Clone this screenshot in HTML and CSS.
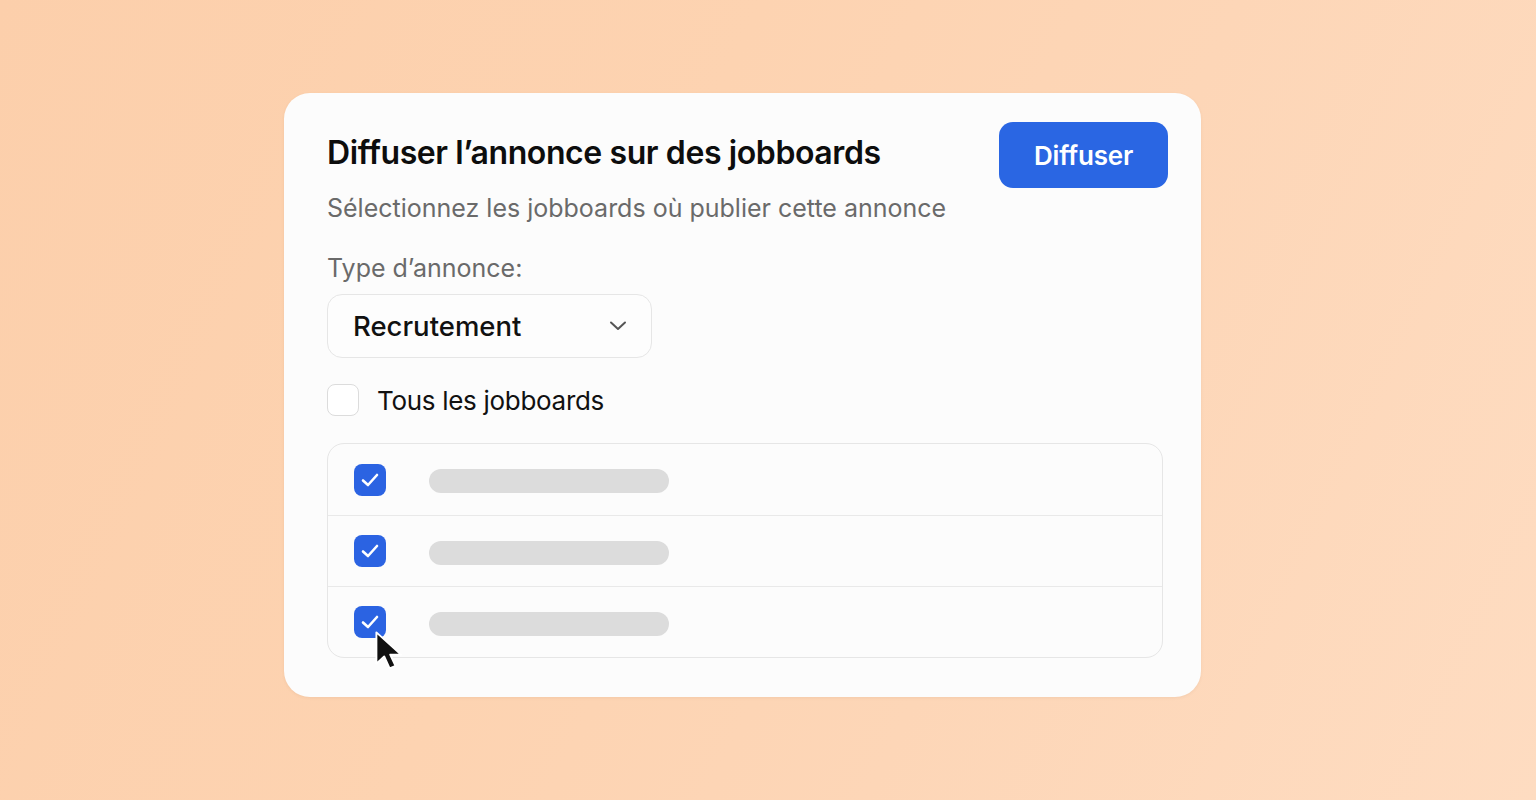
FILE: index.html
```html
<!DOCTYPE html>
<html lang="fr">
<head>
<meta charset="utf-8">
<title>Diffuser l’annonce</title>
<link rel="stylesheet" href="styles.css">
</head>
<body>
<div class="stage">
  <div class="card">
    <div class="header">
      <div class="heading">
        <h1 class="title">Diffuser l’annonce sur des jobboards</h1>
        <p class="subtitle">Sélectionnez les jobboards où publier cette annonce</p>
      </div>
      <button class="btn">Diffuser</button>
    </div>
    <div class="label">Type d’annonce:</div>
    <div class="select">
      <span class="select-value">Recrutement</span>
      <svg class="chev" width="18" height="12" viewBox="0 0 18 12"><path d="M2 2.5 L9 9 L16 2.5" fill="none" stroke="#555" stroke-width="2" stroke-linecap="round" stroke-linejoin="round"/></svg>
    </div>
    <label class="all">
      <span class="box"></span>
      <span class="all-text">Tous les jobboards</span>
    </label>
    <div class="list">
      <div class="row">
        <span class="box checked"><svg width="20" height="16" viewBox="0 0 20 16"><path d="M3 8.5 L8 13 L17 3" fill="none" stroke="#fff" stroke-width="2.6" stroke-linecap="round" stroke-linejoin="round"/></svg></span>
        <span class="bar"></span>
      </div>
      <div class="row">
        <span class="box checked"><svg width="20" height="16" viewBox="0 0 20 16"><path d="M3 8.5 L8 13 L17 3" fill="none" stroke="#fff" stroke-width="2.6" stroke-linecap="round" stroke-linejoin="round"/></svg></span>
        <span class="bar"></span>
      </div>
      <div class="row">
        <span class="box checked"><svg width="20" height="16" viewBox="0 0 20 16"><path d="M3 8.5 L8 13 L17 3" fill="none" stroke="#fff" stroke-width="2.6" stroke-linecap="round" stroke-linejoin="round"/></svg>
          <svg class="cursor" width="36" height="48" viewBox="0 0 30 40"><path d="M2 2 L2 28 L8.5 22 L13 32 L18 30 L13.5 20.5 L22.5 20.5 Z" fill="#111" stroke="#fff" stroke-width="1.6" stroke-linejoin="round"/></svg>
        </span>
        <span class="bar"></span>
      </div>
    </div>
  </div>
</div>
</body>
</html>
```

FILE: styles.css
```css
* { box-sizing: border-box; }
html, body { margin: 0; height: 100%; }
body {
  font-family: Inter, "Noto Sans", "Liberation Sans", sans-serif;
  background: linear-gradient(115deg, #fccfab 0%, #fdd3b1 40%, #fdd6b7 65%, #fedcc1 100%);
  overflow: hidden;
}
.stage {
  padding: 93px 0 0 284px;
}
.card {
  width: 917px;
  height: 604px;
  background: #fcfcfc;
  border-radius: 26px;
  padding: 29px 33px 39px 43px;
  box-shadow: 0 1px 3px rgba(160, 110, 70, 0.10);
}
.header {
  display: flex;
  justify-content: space-between;
  align-items: flex-start;
}
.heading { padding-top: 12px; }
.title {
  margin: 0;
  font-size: 32px;
  line-height: 38px;
  font-weight: 600;
  letter-spacing: -0.4px;
  color: #0d0d0d;
}
.subtitle {
  margin: 20px 0 0;
  font-size: 25px;
  line-height: 32px;
  color: #6a6a6a;
  letter-spacing: 0;
}
.btn {
  width: 169px;
  height: 66px;
  border: none;
  border-radius: 14px;
  background: #2a66e3;
  color: #fff;
  font-family: inherit;
  font-size: 26px;
  font-weight: 600;
  letter-spacing: -0.2px;
  padding: 0;
}
.label {
  margin-top: 28px;
  font-size: 25px;
  line-height: 32px;
  color: #6a6a6a;
}
.select {
  margin-top: 10px;
  width: 325px;
  height: 64px;
  border: 1.5px solid #e6e6e6;
  border-radius: 15px;
  background: #fdfdfd;
  display: flex;
  align-items: center;
  justify-content: space-between;
  padding: 0 24px 0 25px;
}
.select-value {
  font-size: 27.5px;
  font-weight: 500;
  color: #111;
  letter-spacing: 0;
}
.all {
  margin-top: 26px;
  display: flex;
  align-items: center;
  gap: 18px;
  height: 32px;
}
.box {
  width: 32px;
  height: 32px;
  border-radius: 8px;
  border: 1.5px solid #dcdcdc;
  background: #fff;
  flex: none;
  display: flex;
  align-items: center;
  justify-content: center;
}
.all-text {
  font-size: 26px;
  color: #111;
  letter-spacing: -0.3px;
}
.list {
  margin-top: 27px;
  width: 836px;
  border: 1px solid #e6e6e6;
  border-radius: 17px;
  background: #fcfcfc;
}
.row {
  height: 71px;
  display: flex;
  align-items: center;
  padding-left: 26px;
  gap: 43px;
}
.row + .row { border-top: 1px solid #e9e9e9; }
.box.checked {
  background: #2b63e2;
  border: none;
  position: relative;
}
.bar {
  width: 240px;
  height: 24px;
  border-radius: 12px;
  background: #dcdcdc;
  margin-top: 3px;
}
.cursor {
  position: absolute;
  left: 20px;
  top: 24px;
}
```
